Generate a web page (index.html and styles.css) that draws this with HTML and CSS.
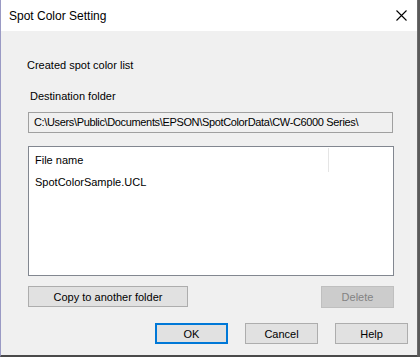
FILE: index.html
```html
<!DOCTYPE html>
<html lang="en">
<head>
    <meta charset="UTF-8">
    <title>Spot Color Setting</title>
    <link rel="stylesheet" href="styles.css">
</head>
<body>
    <div class="dialog">
        <div class="titlebar">
            <span class="title">Spot Color Setting</span>
            <svg class="close" width="11" height="11" viewBox="0 0 11 11">
                <path d="M0.5 0.5 L10.5 10.5 M10.5 0.5 L0.5 10.5" stroke="#000" stroke-width="1.1" fill="none"/>
            </svg>
        </div>
        <div class="content">
            <p class="section-label">Created spot color list</p>
            <p class="field-label">Destination folder</p>
            <div class="path-box">C:\Users\Public\Documents\EPSON\SpotColorData\CW-C6000 Series\</div>
            <div class="file-list">
                <div class="list-header">
                    <span class="col-name">File name</span>
                </div>
                <div class="list-item">SpotColorSample.UCL</div>
            </div>
            <div class="list-actions">
                <button class="btn btn-copy">Copy to another folder</button>
                <button class="btn btn-delete" disabled>Delete</button>
            </div>
            <div class="dialog-buttons">
                <button class="btn btn-ok">OK</button>
                <button class="btn">Cancel</button>
                <button class="btn">Help</button>
            </div>
        </div>
    </div>
</body>
</html>
```

FILE: styles.css
```css
body {
    margin: 0;
    padding: 0;
    background: #5a5a5a;
    font-family: "Liberation Sans", Arial, sans-serif;
    font-size: 11px;
    color: #000;
}
.dialog {
    width: 416px;
    height: 355px;
    background: #f0f0f0;
    border-left: 1px solid #9a9ac4;
    border-right: 1px solid #6b6b6b;
    border-bottom: 2px solid #4a4a4a;
    display: flex;
    flex-direction: column;
}
.titlebar {
    height: 31px;
    background: #fff;
    display: flex;
    align-items: center;
    justify-content: space-between;
    padding: 0 10px 0 8px;
}
.title {
    font-size: 12px;
    padding-top: 1px;
}
.close {
    margin-top: -1px;
}
.content {
    padding: 26px 0 0 27px;
}
p {
    margin: 0;
    line-height: 16px;
}
.section-label {
    margin-left: -1px;
}
.field-label {
    margin: 15px 0 0 2px;
}
.path-box {
    width: 358px;
    height: 19px;
    margin-top: 8px;
    border: 1px solid #a0a0a0;
    background: #f0f0f0;
    padding-left: 5px;
    line-height: 19px;
    letter-spacing: -0.35px;
    white-space: nowrap;
    overflow: hidden;
}
.file-list {
    width: 364px;
    height: 128px;
    margin-top: 13px;
    border: 1px solid #828790;
    background: #fff;
}
.list-header {
    display: flex;
    height: 24px;
    margin-top: 1px;
}
.col-name {
    width: 293px;
    padding-left: 6px;
    line-height: 24px;
    border-right: 1px solid #e5e5e5;
}
.list-item {
    padding-left: 6px;
    line-height: 20px;
}
.btn {
    font-family: inherit;
    font-size: 11px;
    background: #e1e1e1;
    border: 1px solid #adadad;
    height: 21px;
    padding: 0;
    color: #000;
}
.list-actions {
    display: flex;
    justify-content: space-between;
    width: 366px;
    margin-top: 10px;
}
.btn-copy {
    width: 160px;
}
.btn-delete {
    width: 73px;
    height: 22px;
    background: #cccccc;
    border-color: #bfbfbf;
    color: #838383;
}
.dialog-buttons {
    display: flex;
    gap: 17px;
    margin: 15px 0 0 127px;
}
.dialog-buttons .btn {
    width: 73px;
}
.btn-ok {
    border: 2px solid #0078d7;
}
```
